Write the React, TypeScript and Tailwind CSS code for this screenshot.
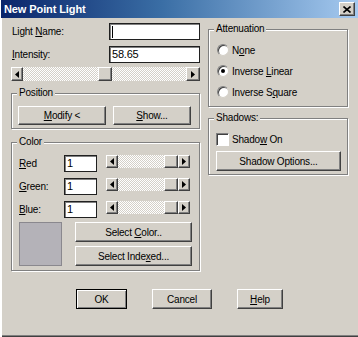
import React from "react";

const font = { fontFamily: '"Liberation Sans", Arial, sans-serif' };

function U({ children }: { children: React.ReactNode }) {
    return <span className="underline underline-offset-[1px] decoration-[1px]">{children}</span>;
}

const raised =
    "bg-[#d4d0c8] border border-t-white border-l-white border-r-[#404040] border-b-[#404040] shadow-[inset_-1px_-1px_0_#808080]";

function Btn({ w, h = 20, def, children }: { w: string; h?: number; def?: boolean; children: React.ReactNode }) {
    const cls = def
        ? "bg-[#d4d0c8] border border-black shadow-[inset_1px_1px_0_#fff,inset_-1px_-1px_0_#808080]"
        : raised;
    return (
        <div className={`${cls} ${w} flex items-center justify-center text-black`} style={{ height: h }}>
            {children}
        </div>
    );
}

function Arrow({ dir, size }: { dir: "left" | "right"; size: string }) {
    return (
        <div className={`${raised} ${size} flex items-center justify-center shrink-0`}>
            <svg width="4" height="7" viewBox="0 0 4 7">
                {dir === "left" ? <polygon points="4,0 4,7 0,3.5" fill="#000" /> : <polygon points="0,0 0,7 4,3.5" fill="#000" />}
            </svg>
        </div>
    );
}

const track =
    "flex-1 flex bg-[image:repeating-conic-gradient(#d4d0c8_0%_25%,#ffffff_0%_50%)] bg-[length:2px_2px]";

function Input({ w, h = 17, value, caret }: { w: string; h?: number; value?: string; caret?: boolean }) {
    return (
        <div
            className={`${w} bg-white border border-[#202020] shadow-[inset_1px_1px_0_#808080] flex items-center pl-[2px] text-black text-[11px]`}
            style={{ height: h }}
        >
            {caret && <span className="w-px h-[12px] bg-black" />}
            {value}
        </div>
    );
}

function Group({ title, className, children }: { title: string; className: string; children: React.ReactNode }) {
    return (
        <div className={`relative border border-[#808080] shadow-[inset_1px_1px_0_#fff,1px_1px_0_#fff] ${className}`}>
            <span className="absolute left-[5px] top-[-7px] px-[2px] bg-[#d4d0c8] leading-[12px]">{title}</span>
            {children}
        </div>
    );
}

function ColorRow({ label }: { label: React.ReactNode }) {
    return (
        <div className="flex items-start h-[17px]">
            <div className="w-[45px] leading-[17px]">{label}</div>
            <Input w="w-[33px]" value="1" />
            <div className="ml-[9px] w-[84px] h-[13px] flex">
                <Arrow dir="left" size="w-[12px] h-[13px]" />
                <div className={`${track} justify-end`}>
                    <div className={`${raised} w-[14px] h-[13px]`} />
                </div>
                <Arrow dir="right" size="w-[12px] h-[13px]" />
            </div>
        </div>
    );
}

function Radio({ on, children }: { on?: boolean; children: React.ReactNode }) {
    return (
        <div className="flex items-center h-[12px] gap-[3px]">
            <div className="w-[12px] h-[12px] rounded-full bg-white border border-t-[#808080] border-l-[#808080] border-r-[#d4d0c8] border-b-[#d4d0c8] shadow-[inset_1px_1px_0_#404040] flex items-center justify-center">
                {on && <div className="w-[4px] h-[4px] rounded-full bg-black" />}
            </div>
            <span>{children}</span>
        </div>
    );
}

export default function App() {
    return (
        <div
            className="w-[358px] h-[337px] bg-[#d4d0c8] text-[10px] text-black tracking-[-0.2px] flex flex-col shadow-[inset_2px_0_0_#fff,inset_0_-1px_0_#404040,inset_0_-2px_0_#808080] overflow-hidden"
            style={font}
        >
            <div className="h-[18px] shrink-0 ml-[1px] flex items-center bg-[linear-gradient(90deg,#0a246a_0%,#3a6ea5_45%,#a6caf0_100%)]">
                <span className="ml-[3px] text-white font-bold text-[11px] tracking-[-0.1px]">New Point Light</span>
                <div className={`${raised} ml-auto mr-[3px] w-[16px] h-[14px] flex items-center justify-center`}>
                    <svg width="8" height="7" viewBox="0 0 8 7">
                        <path d="M0.5 0.5 L7.5 6.5 M7.5 0.5 L0.5 6.5" stroke="#000" strokeWidth="1.6" />
                    </svg>
                </div>
            </div>

            <div className="flex">
                <div className="ml-[11px] w-[189px] flex flex-col">
                    <div className="mt-[5px] flex items-center h-[17px]">
                        <span className="ml-px w-[97px]">Light <U>N</U>ame:</span>
                        <Input w="w-[91px]" caret />
                    </div>
                    <div className="mt-[6px] flex items-center h-[17px]">
                        <span className="ml-px w-[97px]"><U>I</U>ntensity:</span>
                        <Input w="w-[91px]" value="58.65" />
                    </div>
                    <div className="mt-[4px] h-[14px] flex">
                        <Arrow dir="left" size="w-[12px] h-[14px]" />
                        <div className={track}>
                            <div className={`${raised} ml-[75px] w-[14px] h-[14px]`} />
                        </div>
                        <Arrow dir="right" size="w-[14px] h-[14px]" />
                    </div>

                    <Group title="Position" className="mt-[12px] h-[36px] pl-[6px] pt-[12px]">
                        <div className="flex gap-[7px]">
                            <Btn w="w-[88px]" h={19}><span><U>M</U>odify &lt;</span></Btn>
                            <Btn w="w-[78px]" h={19}><span><U>S</U>how...</span></Btn>
                        </div>
                    </Group>

                    <Group title="Color" className="mt-[13px] h-[129px] pl-[7px] pt-[12px]">
                        <div className="flex flex-col gap-[6px]">
                            <ColorRow label={<><U>R</U>ed</>} />
                            <ColorRow label={<><U>G</U>reen:</>} />
                            <ColorRow label={<><U>B</U>lue:</>} />
                        </div>
                        <div className="mt-[4px] flex">
                            <div className="w-[43px] h-[44px] bg-[#b4b2b8] border border-[#8a888e]" />
                            <div className="ml-[13px] flex flex-col gap-[4px]">
                                <Btn w="w-[117px]"><span>Select <U>C</U>olor..</span></Btn>
                                <Btn w="w-[117px]"><span>Select Inde<U>x</U>ed...</span></Btn>
                            </div>
                        </div>
                    </Group>
                </div>

                <div className="ml-[8px] w-[140px] flex flex-col">
                    <Group title="Attenuation" className="mt-[11px] h-[78px] pl-[8px] pt-[14px]">
                        <div className="flex flex-col gap-[9px]">
                            <Radio>N<U>o</U>ne</Radio>
                            <Radio on>Inverse <U>L</U>inear</Radio>
                            <Radio>Inverse S<U>q</U>uare</Radio>
                        </div>
                    </Group>
                    <Group title="Shadows:" className="mt-[11px] h-[57px] pl-[7px] pt-[14px]">
                        <div className="flex items-center h-[13px] gap-[3px]">
                            <div className="w-[13px] h-[13px] bg-white border border-t-[#808080] border-l-[#808080] border-r-white border-b-white shadow-[inset_1px_1px_0_#404040]" />
                            <span>Shado<U>w</U> On</span>
                        </div>
                        <div className="mt-[5px]">
                            <Btn w="w-[125px]"><span>Shadow Options...</span></Btn>
                        </div>
                    </Group>
                </div>
            </div>

            <div className="mt-[18px] ml-[76px] flex">
                <Btn w="w-[51px]" def>OK</Btn>
                <div className="ml-[25px]"><Btn w="w-[60px]">Cancel</Btn></div>
                <div className="ml-[25px]"><Btn w="w-[46px]"><span><U>H</U>elp</span></Btn></div>
            </div>
        </div>
    );
}
